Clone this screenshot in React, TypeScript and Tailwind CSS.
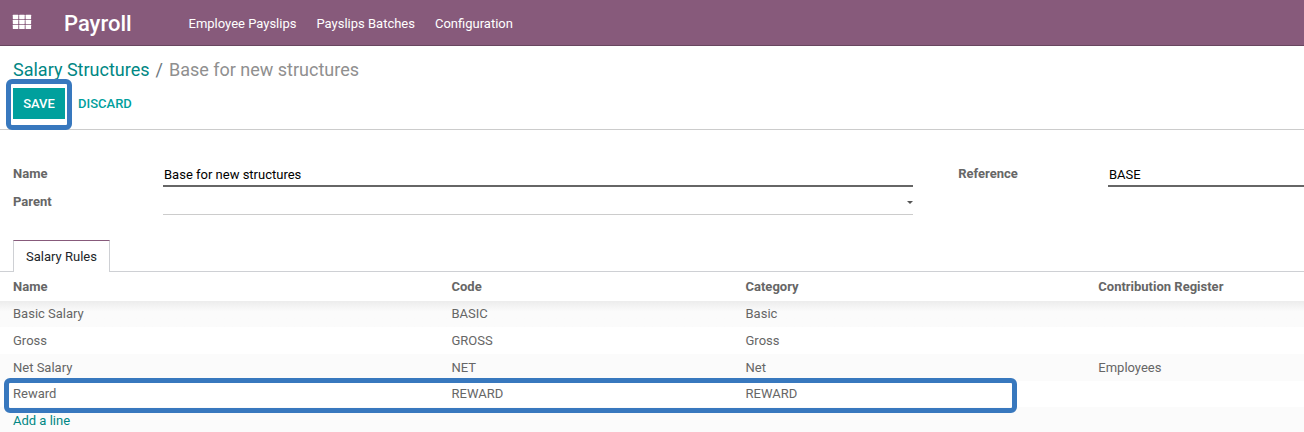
import React from "react";

type Rule = { name: string; code: string; category: string; register?: string };

const rules: Rule[] = [
  { name: "Basic Salary", code: "BASIC", category: "Basic" },
  { name: "Gross", code: "GROSS", category: "Gross" },
  { name: "Net Salary", code: "NET", category: "Net", register: "Employees" },
  { name: "Reward", code: "REWARD", category: "REWARD" },
];

const rowStyles = [
  "h-[26px] pt-[3px] bg-[#fbfbfb] bg-linear-to-b from-[#ececec] to-[#fbfbfb] to-40%",
  "h-[27px] pt-1 bg-white",
  "h-[27px] pt-1 bg-[#fbfbfb]",
  "h-[26px] pt-[3px] bg-white",
];

const columns = "grid grid-cols-[438.5px_294px_352.8px_1fr] pl-[13px]";

function AppsIcon() {
  return (
    <svg width="18" height="14" viewBox="0 0 18 14" fill="#fff" className="shrink-0 overflow-visible">
      {[-0.2, 4.8, 9.8].map((y) =>
        [-0.2, 6.2, 12.6].map((x) => (
          <rect key={`${x}-${y}`} x={x} y={y} width="5.5" height="4.3" rx="0.5" />
        )),
      )}
    </svg>
  );
}

function Navbar() {
  return (
    <header className="flex h-[46px] items-center border-b border-[#68465f] bg-[#875a7b] pl-[13px] text-white">
      <div className="-mt-[1px]">
        <AppsIcon />
      </div>
      <h1 className="ml-[33px] w-[124.5px] pt-[2px] text-[22px] leading-[30px] font-medium">Payroll</h1>
      <nav className="flex gap-5 pt-[2px] text-[13px] leading-5">
        <a>Employee Payslips</a>
        <a>Payslips Batches</a>
        <a>Configuration</a>
      </nav>
    </header>
  );
}

function ControlPanel() {
  return (
    <section className="h-[84px] border-b border-[#cccccc] pt-[10px] pl-[13px]">
      <div className="flex h-[26px] items-center text-[18px]">
        <a className="text-[#008784]">Salary Structures</a>
        <span className="px-[6px] text-[#6c757d]">/</span>
        <span className="text-[#8f8f8f]">Base for new structures</span>
      </div>
      <div className="mt-[6px] flex h-[31px] items-center text-[13px] font-medium">
        <div className="relative">
          <button className="block h-[31px] w-[52px] bg-[#00a09d] text-white">SAVE</button>
          <div className="pointer-events-none absolute -top-[9px] -left-[7px] h-[51px] w-[66px] rounded-[6px] border-5 border-[#3878be]" />
        </div>
        <button className="ml-[13px] text-[#00a09d]">DISCARD</button>
      </div>
    </section>
  );
}

function StructureForm() {
  return (
    <section className="flex h-[110px] pt-[31px] pl-[13px] text-[13px] leading-5">
      <div className="grid h-[54px] w-[900px] grid-cols-[150px_750px] grid-rows-[26px_28px]">
        <label className="pt-[3px] font-bold text-[#666]">Name</label>
        <div className="border-b-2 border-[#666] pt-1 pl-px text-black">Base for new structures</div>
        <label className="pt-[5px] font-bold text-[#666]">Parent</label>
        <div className="flex justify-end border-b border-[#ccc] pt-[14px]">
          <svg width="6" height="3" viewBox="0 0 6 3" fill="#555">
            <path d="M0 0h6L3 3z" />
          </svg>
        </div>
      </div>
      <div className="ml-[45px] grid h-[26px] flex-1 grid-cols-[150px_1fr]">
        <label className="pt-[3px] pl-[0.2px] font-bold text-[#666]">Reference</label>
        <div className="border-b-2 border-[#666] pt-1 pl-px text-black">BASE</div>
      </div>
    </section>
  );
}

function RulesTable() {
  return (
    <section className="text-[13px] leading-5 text-[#666]">
      <div className="flex h-8 border-b border-[#ced0d4] pl-[13px]">
        <div className="h-8 w-[97px] border-x border-t border-x-[#ced0d4] border-t-[#875a7b] bg-white pt-[6px] text-center text-[#212529]">
          Salary Rules
        </div>
      </div>
      <div className={`${columns} h-[29px] pt-[5px] font-bold`}>
        <div>Name</div>
        <div>Code</div>
        <div>Category</div>
        <div>Contribution Register</div>
      </div>
      {rules.map((rule, i) => (
        <div key={rule.code} className={`${columns} relative ${rowStyles[i]}`}>
          <div>{rule.name}</div>
          <div>{rule.code}</div>
          <div>{rule.category}</div>
          <div>{rule.register}</div>
          {rule.code === "REWARD" && (
            <div className="pointer-events-none absolute -top-[3px] left-1 z-10 h-[35px] w-[1013px] rounded-[6px] border-5 border-[#3878be]" />
          )}
        </div>
      ))}
      <div className="h-[25px] bg-[#fbfbfb] pt-1 pl-[13px] text-[#008784]">Add a line</div>
    </section>
  );
}

export default function App() {
  return (
    <main className="h-[432px] w-[1304px] overflow-hidden bg-white font-['Roboto',sans-serif]">
      <Navbar />
      <ControlPanel />
      <StructureForm />
      <RulesTable />
    </main>
  );
}
